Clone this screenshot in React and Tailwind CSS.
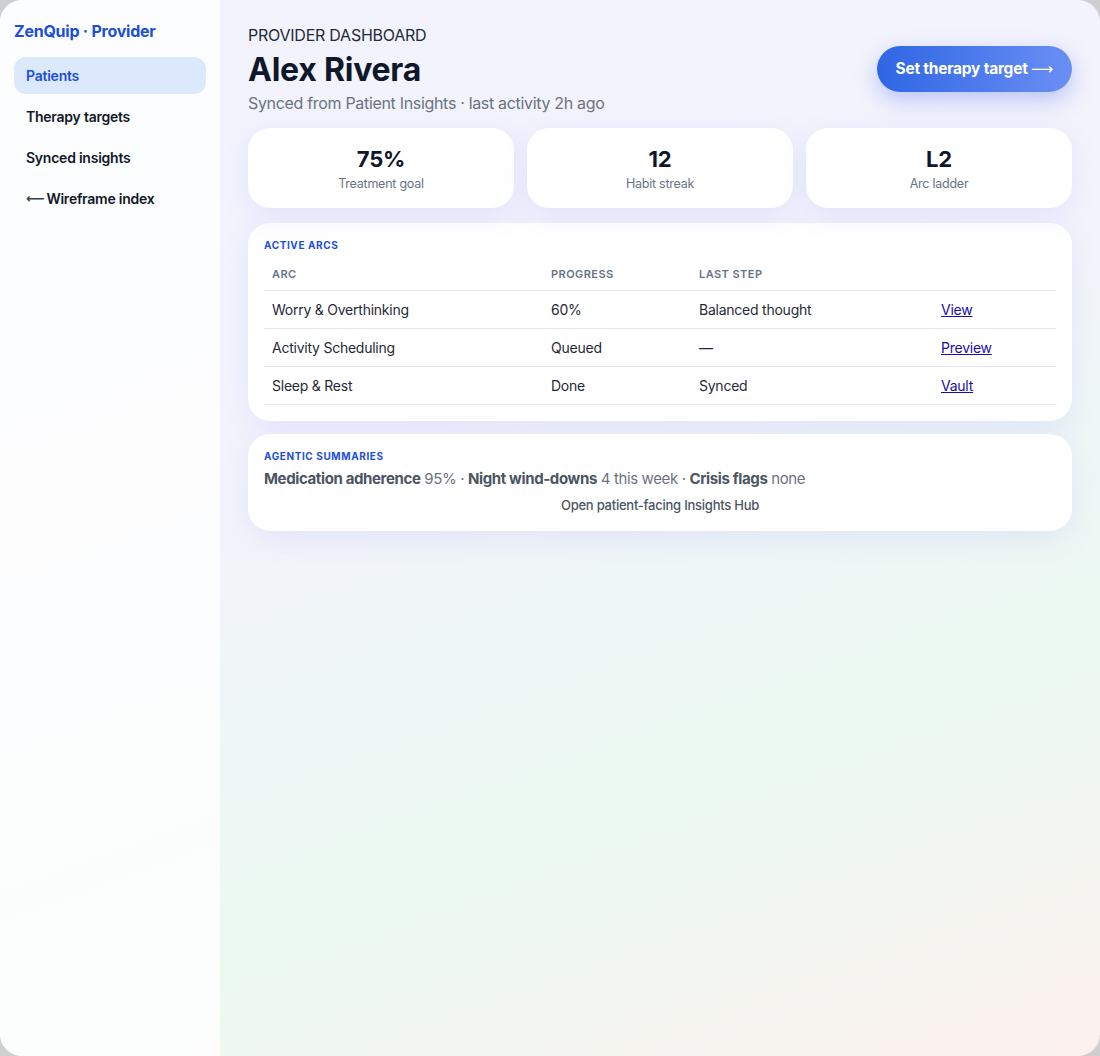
import React from 'react';

const stats = [
  { value: '75%', label: 'Treatment goal' },
  { value: '12', label: 'Habit streak' },
  { value: 'L2', label: 'Arc ladder' },
];

const arcs = [
  { arc: 'Worry & Overthinking', progress: '60%', step: 'Balanced thought', link: 'View' },
  { arc: 'Activity Scheduling', progress: 'Queued', step: '—', link: 'Preview' },
  { arc: 'Sleep & Rest', progress: 'Done', step: 'Synced', link: 'Vault' },
];

const nav = ['Patients', 'Therapy targets', 'Synced insights'];

// thin long arrow, drawn from a font whose arrow glyph is light
const Arrow = () => <span className="font-normal" style={{ fontFamily: '"DejaVu Sans", sans-serif' }}>⟶</span>;

const Sidebar = () => (
  <aside className="w-[220px] shrink-0 bg-white/80 px-[14px] pt-[21px] tracking-[-0.015em]">
    <div className="text-[16px] font-bold text-[#1d4ed8] leading-5 mb-[16px]">ZenQuip · Provider</div>
    <nav className="flex flex-col gap-[4px]">
      {nav.map((item, i) => (
        <a
          key={item}
          href="#"
          className={
            i === 0
              ? 'h-[37px] flex items-center px-3 rounded-xl bg-[#dce8fc] text-[#1d4ed8] text-[14px] font-semibold'
              : 'h-[37px] flex items-center px-3 rounded-xl text-[#111827] text-[14px] font-semibold'
          }
        >
          {item}
        </a>
      ))}
      <a href="#" className="h-[37px] flex items-center gap-[2px] px-3 text-[#111827] text-[14px] font-semibold">
        <span className="text-[13px] text-[#374151]" style={{ fontFamily: '"DejaVu Sans", sans-serif' }}>⟵</span>
        Wireframe index
      </a>
    </nav>
  </aside>
);

const Card = ({ className = '', children }) => (
  <div className={`bg-white rounded-[22px] shadow-[0_8px_30px_rgba(99,102,241,0.10)] ${className}`}>{children}</div>
);

export default function App() {
  return (
    <div className="min-h-[1056px] bg-[#cfcfd2]" style={{ fontFamily: 'Inter, "Noto Sans", sans-serif' }}>
      <div className="flex h-[1056px] rounded-[22px] overflow-hidden bg-[linear-gradient(160deg,#f1f3fd_0%,#f3f3fc_38%,#ebf9f1_72%,#fcf0ee_100%)]">
        <Sidebar />
        <main className="flex-1 px-[28px] pt-[25px] tracking-[-0.015em]">
          <div className="flex items-start justify-between">
            <div>
              <div className="text-[16px] text-[#1f2937] leading-5">PROVIDER DASHBOARD</div>
              <h1 className="text-[32px] font-bold text-[#0f172a] leading-[40px] mt-[5px]">Alex Rivera</h1>
              <p className="text-[16px] text-[#6b7280] leading-6 mt-[1px] tracking-[-0.02em]">
                Synced from Patient Insights · last activity 2h ago
              </p>
            </div>
            <button className="mt-[21px] h-[46px] px-[19px] rounded-full bg-[linear-gradient(90deg,#2f66e4,#6a8ff4)] text-white text-[15.5px] font-bold shadow-[0_8px_22px_rgba(79,109,240,0.35)]">
              Set therapy target <Arrow />
            </button>
          </div>

          <div className="grid grid-cols-3 gap-[13px] mt-[13px]">
            {stats.map((s) => (
              <Card key={s.label} className="h-[80px] flex flex-col items-center justify-center">
                <div className="text-[22px] font-bold text-[#0f172a] leading-7">{s.value}</div>
                <div className="text-[12.5px] text-[#6b7280] leading-4 mt-[3px]">{s.label}</div>
              </Card>
            ))}
          </div>

          <Card className="mt-[15px] px-[16px] pt-[16px] pb-[16px]">
            <div className="text-[10px] font-bold text-[#1d4ed8] tracking-[0.06em] leading-3">ACTIVE ARCS</div>
            <table className="w-full mt-[7px] text-left">
              <thead>
                <tr className="border-b border-[#e5e7eb]">
                  <th className="w-[279px] px-2 h-[32px] text-[11px] font-semibold text-[#64748b] tracking-[0.04em]">ARC</th>
                  <th className="w-[148px] px-2 text-[11px] font-semibold text-[#64748b] tracking-[0.04em]">PROGRESS</th>
                  <th className="w-[242px] px-2 text-[11px] font-semibold text-[#64748b] tracking-[0.04em]">LAST STEP</th>
                  <th className="px-2"></th>
                </tr>
              </thead>
              <tbody>
                {arcs.map((r) => (
                  <tr key={r.arc} className="border-b border-[#e5e7eb] text-[14px] text-[#1f2937]">
                    <td className="px-2 h-[38px] pt-[1px]">{r.arc}</td>
                    <td className="px-2 pt-[1px]">{r.progress}</td>
                    <td className="px-2 pt-[1px]">{r.step}</td>
                    <td className="px-2 pt-[1px]">
                      <a href="#" className="underline text-[#1a0dab]">{r.link}</a>
                    </td>
                  </tr>
                ))}
              </tbody>
            </table>
          </Card>

          <Card className="mt-[13px] px-[16px] pt-[16px] pb-[16px]">
            <div className="text-[10px] font-bold text-[#1d4ed8] tracking-[0.06em] leading-3">AGENTIC SUMMARIES</div>
            <p className="text-[15px] text-[#6b7280] leading-6 mt-[5px] tracking-[-0.025em]">
              <b className="font-bold text-[#4b5563]">Medication adherence</b> 95% ·{' '}
              <b className="font-bold text-[#4b5563]">Night wind-downs</b> 4 this week ·{' '}
              <b className="font-bold text-[#4b5563]">Crisis flags</b> none
            </p>
            <div className="text-center text-[13px] font-medium text-[#4b5563] leading-5 mt-[4px]">
              Open patient-facing Insights Hub
            </div>
          </Card>
        </main>
      </div>
    </div>
  );
}
